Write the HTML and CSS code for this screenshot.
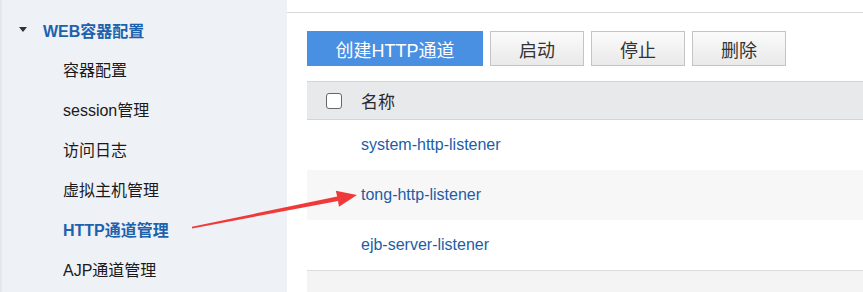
FILE: index.html
```html
<!DOCTYPE html>
<html lang="zh-CN">
<head>
    <meta charset="UTF-8">
    <title>HTTP通道管理</title>
    <link rel="stylesheet" href="styles.css">
</head>
<body>
    <div class="page">
        <div class="sidebar">
            <div class="menu-group">
                <span class="caret"></span>WEB容器配置
            </div>
            <div class="menu-item">容器配置</div>
            <div class="menu-item">session管理</div>
            <div class="menu-item">访问日志</div>
            <div class="menu-item">虚拟主机管理</div>
            <div class="menu-item active">HTTP通道管理</div>
            <div class="menu-item">AJP通道管理</div>
        </div>
        <div class="main">
            <div class="tabbar"></div>
            <div class="toolbar">
                <button class="btn btn-primary">创建HTTP通道</button>
                <button class="btn">启动</button>
                <button class="btn">停止</button>
                <button class="btn">删除</button>
            </div>
            <table class="grid">
                <thead>
                    <tr>
                        <th class="col-check"><span class="checkbox"></span></th>
                        <th>名称</th>
                    </tr>
                </thead>
                <tbody>
                    <tr><td></td><td><a href="#">system-http-listener</a></td></tr>
                    <tr class="odd"><td></td><td><a href="#">tong-http-listener</a></td></tr>
                    <tr><td></td><td><a href="#">ejb-server-listener</a></td></tr>
                    <tr class="empty"><td></td><td></td></tr>
                </tbody>
            </table>
        </div>
    </div>

    <!-- annotation arrow -->
    <svg class="arrow" width="863" height="292" viewBox="0 0 863 292">
        <polygon points="192,226.8 337.2,196.4 335.8,190.8 357,195 339,206.8 338,201 192,228.4" fill="#f03a3a"/>
    </svg>
</body>
</html>
```

FILE: styles.css
```css
body { margin: 0; font-family: "Liberation Sans", "Noto Sans CJK SC", sans-serif; background: #fff; overflow: hidden; }
.page { display: flex; height: 292px; }

.sidebar { width: 285px; flex: none; background: #eef1f6; border-left: 2px solid #e3e7ee; padding-top: 10px; font-size: 16px; color: #1a1a1a; }
.menu-group { height: 40px; display: flex; align-items: center; padding-left: 17px; font-weight: bold; color: #1d62ad; }
.caret { width: 0; height: 0; border-left: 4px solid transparent; border-right: 4px solid transparent; border-top: 5px solid #333; margin-right: 16px; margin-top: -2px; }
.menu-item { height: 40px; display: flex; align-items: center; padding-left: 61px; margin-top: -1px; margin-bottom: 1px; }
.menu-item.active { font-weight: bold; color: #1d62ad; }

.main { flex: 1; padding-left: 20px; overflow: hidden; }
.tabbar { height: 12px; border-bottom: 1px solid #dadada; margin-left: -20px; }
.toolbar { display: flex; gap: 7px; margin-top: 18px; }
.btn { height: 35px; width: 94px; font-family: inherit; font-size: 18px; color: #333; border: 1px solid #c4c4c4; background: linear-gradient(#fbfbfb, #e9e9e9); padding: 0; }
.btn-primary { width: 176px; background: #4a90e2; border-color: #4a90e2; color: #fff; }

.grid { width: 600px; border-collapse: collapse; margin-top: 15px; font-size: 16px; }
.grid th { height: 37px; background: #e8e9ea; border-top: 1px solid #d4d4d4; border-bottom: 1px solid #d4d4d4; text-align: left; font-weight: normal; font-size: 17px; color: #2a2a2a; padding: 0; }
.grid .col-check { width: 54px; }
.checkbox { display: block; width: 14px; height: 14px; margin-left: 19px; border: 1.5px solid #666; border-radius: 3px; background: #fff; }
.grid td { height: 50px; padding: 0; }
.grid tr.odd td { background: #f7f7f7; }
.grid tr.empty td { background: #f4f4f4; border-top: 1px solid #dcdcdc; height: 30px; }
.grid a { color: #1c5ea6; text-decoration: none; }

.arrow { position: absolute; left: 0; top: 0; pointer-events: none; }
```
